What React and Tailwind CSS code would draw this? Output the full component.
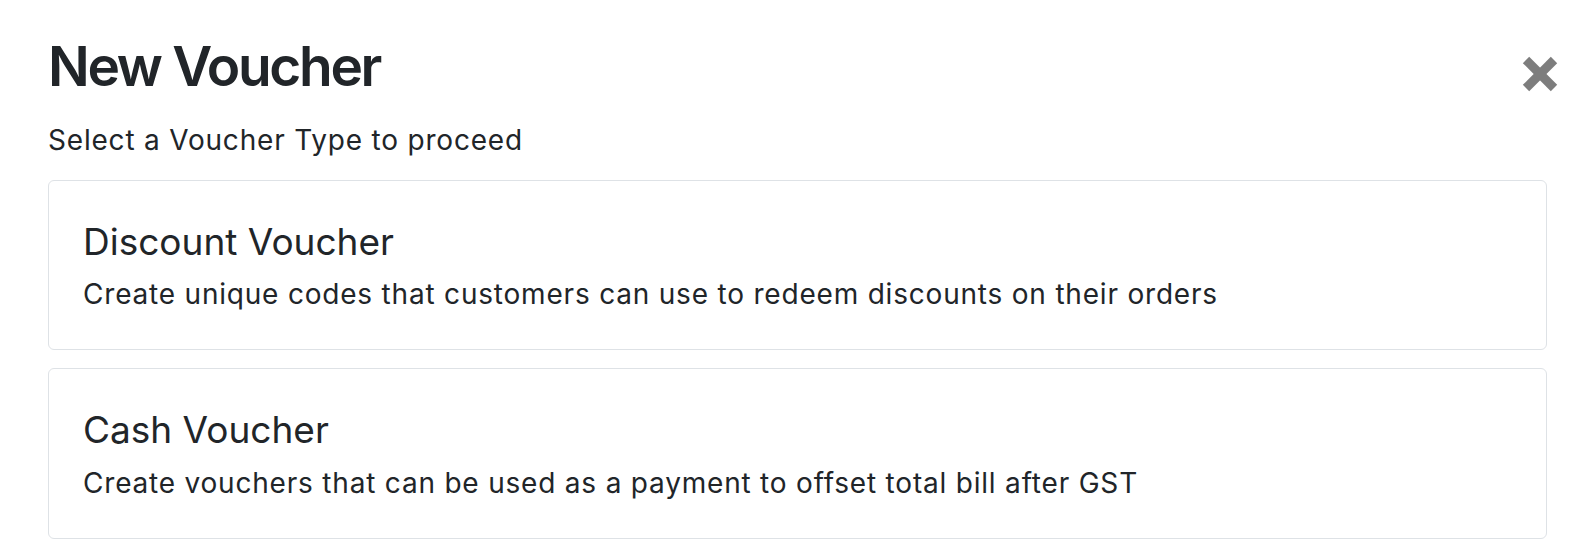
import React from "react";

const VOUCHER_TYPES = [
  { key: "discount", title: "Discount Voucher", desc: "Create unique codes that customers can use to redeem discounts on their orders" },
  { key: "cash", title: "Cash Voucher", desc: "Create vouchers that can be used as a payment to offset total bill after GST" },
];

function CloseIcon() {
  return (
    <svg width="36" height="36" viewBox="0 0 36 36" aria-hidden="true">
      <line x1="4" y1="4" x2="32" y2="32" stroke="#7d7d7d" strokeWidth="9" strokeLinecap="butt" />
      <line x1="32" y1="4" x2="4" y2="32" stroke="#7d7d7d" strokeWidth="9" strokeLinecap="butt" />
    </svg>
  );
}

export default function App() {
  return (
    <div className="min-h-screen bg-white px-[48px] pt-[33px] text-[#212529] font-['Inter','Liberation_Sans',sans-serif]">
      {/* header */}
      <div className="flex items-start justify-between">
        <h2 className="text-[55px] leading-[1.22] font-semibold tracking-[-0.042em]">New Voucher</h2>
        <button className="mr-[-11px] mt-[23px] flex items-center justify-center" aria-label="Close">
          <CloseIcon />
        </button>
      </div>
      <p className="mt-[19px] text-[28px] leading-[1.5] tracking-[0.8px]">Select a Voucher Type to proceed</p>

      {/* voucher types */}
      <div className="mt-[19px] flex flex-col gap-[18px]">
        {VOUCHER_TYPES.map(v => (
          <div key={v.key} className="cursor-pointer rounded-[6px] border border-[#dee2e6] px-[34px] pt-[39px] pb-[34px]">
            <h4 className="text-[37px] leading-[1.2] font-normal">{v.title}</h4>
            <p className="mt-[9px] text-[28px] leading-[1.5] tracking-[0.8px]">{v.desc}</p>
          </div>
        ))}
      </div>
    </div>
  );
}
